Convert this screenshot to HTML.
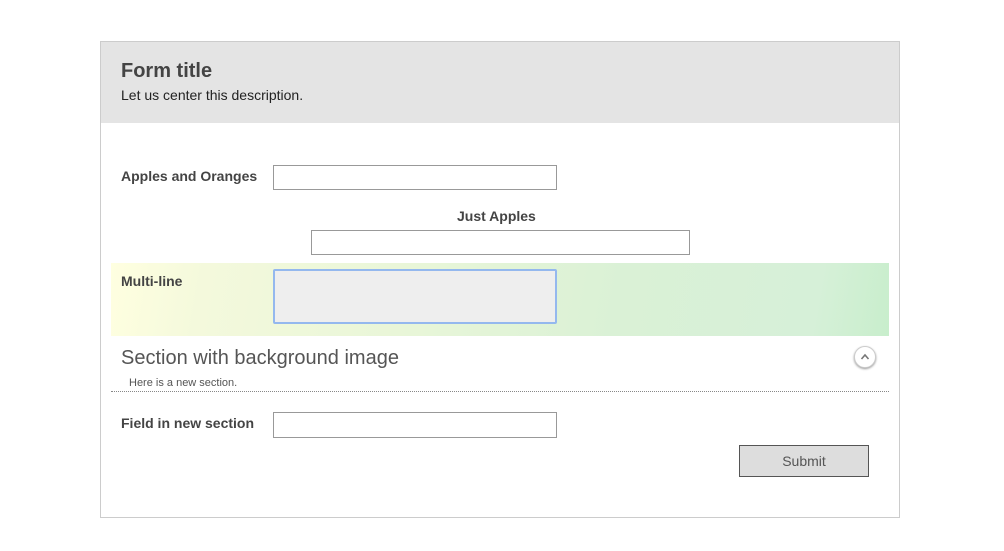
<!DOCTYPE html>
<html><head><style>
body{margin:0;width:1004px;height:551px;background:#fff;font-family:"Liberation Sans",sans-serif;position:relative;overflow:hidden}
.a{position:absolute}
.frame{left:100px;top:41px;width:798px;height:475px;border:1px solid #ccc}
.hdr{left:101px;top:42px;width:798px;height:81px;background:#e4e4e4}
.lbl{font-size:14px;font-weight:bold;color:#444}
.inp{border:1px solid #999;background:#fff;box-sizing:border-box}
</style></head><body>
<div class="a frame"></div>
<div class="a hdr"></div>
<div class="a" style="left:121px;top:60px;font-size:20px;font-weight:bold;color:#444">Form title</div>
<div class="a" style="left:121px;top:87px;font-size:14px;color:#222">Let us center this description.</div>
<div class="a lbl" style="left:121px;top:168px">Apples and Oranges</div>
<div class="a inp" style="left:273px;top:165px;width:284px;height:25px"></div>
<div class="a lbl" style="left:457px;top:208px">Just Apples</div>
<div class="a inp" style="left:311px;top:230px;width:379px;height:25px"></div>
<div class="a" style="left:111px;top:263px;width:778px;height:73px;background:linear-gradient(100deg,#ffffe0 0%,#f4f9dc 12%,#e8f6d8 40%,#daf1d6 65%,#d6f0d8 90%,#c8eecc 100%)"></div>
<div class="a lbl" style="left:121px;top:273px">Multi-line</div>
<div class="a" style="left:273px;top:269px;width:284px;height:55px;box-sizing:border-box;border:2px solid #94b8ee;border-radius:2px;background:#eee"></div>
<div class="a" style="left:121px;top:347px;font-size:20px;color:#555">Section with background image</div>
<div class="a" style="left:854px;top:346px;width:20px;height:20px;border-radius:50%;border:1px solid #ccc;box-shadow:0 1px 2px #999;background:#fff"><svg width="20" height="20" viewBox="0 0 20 20"><path d="M6.5 12 L10 8 L13.5 12" fill="none" stroke="#777" stroke-width="1.6"/></svg></div>
<div class="a" style="left:129px;top:377px;font-size:11px;color:#555">Here is a new section.</div>
<div class="a" style="left:111px;top:391px;width:778px;border-top:1px dotted #888"></div>
<div class="a lbl" style="left:121px;top:415px">Field in new section</div>
<div class="a inp" style="left:273px;top:412px;width:284px;height:26px"></div>
<div class="a" style="left:739px;top:445px;width:130px;height:32px;box-sizing:border-box;border:1px solid #555;background:#ddd;text-align:center;line-height:30px;font-size:14px;color:#555">Submit</div>
</body></html>
